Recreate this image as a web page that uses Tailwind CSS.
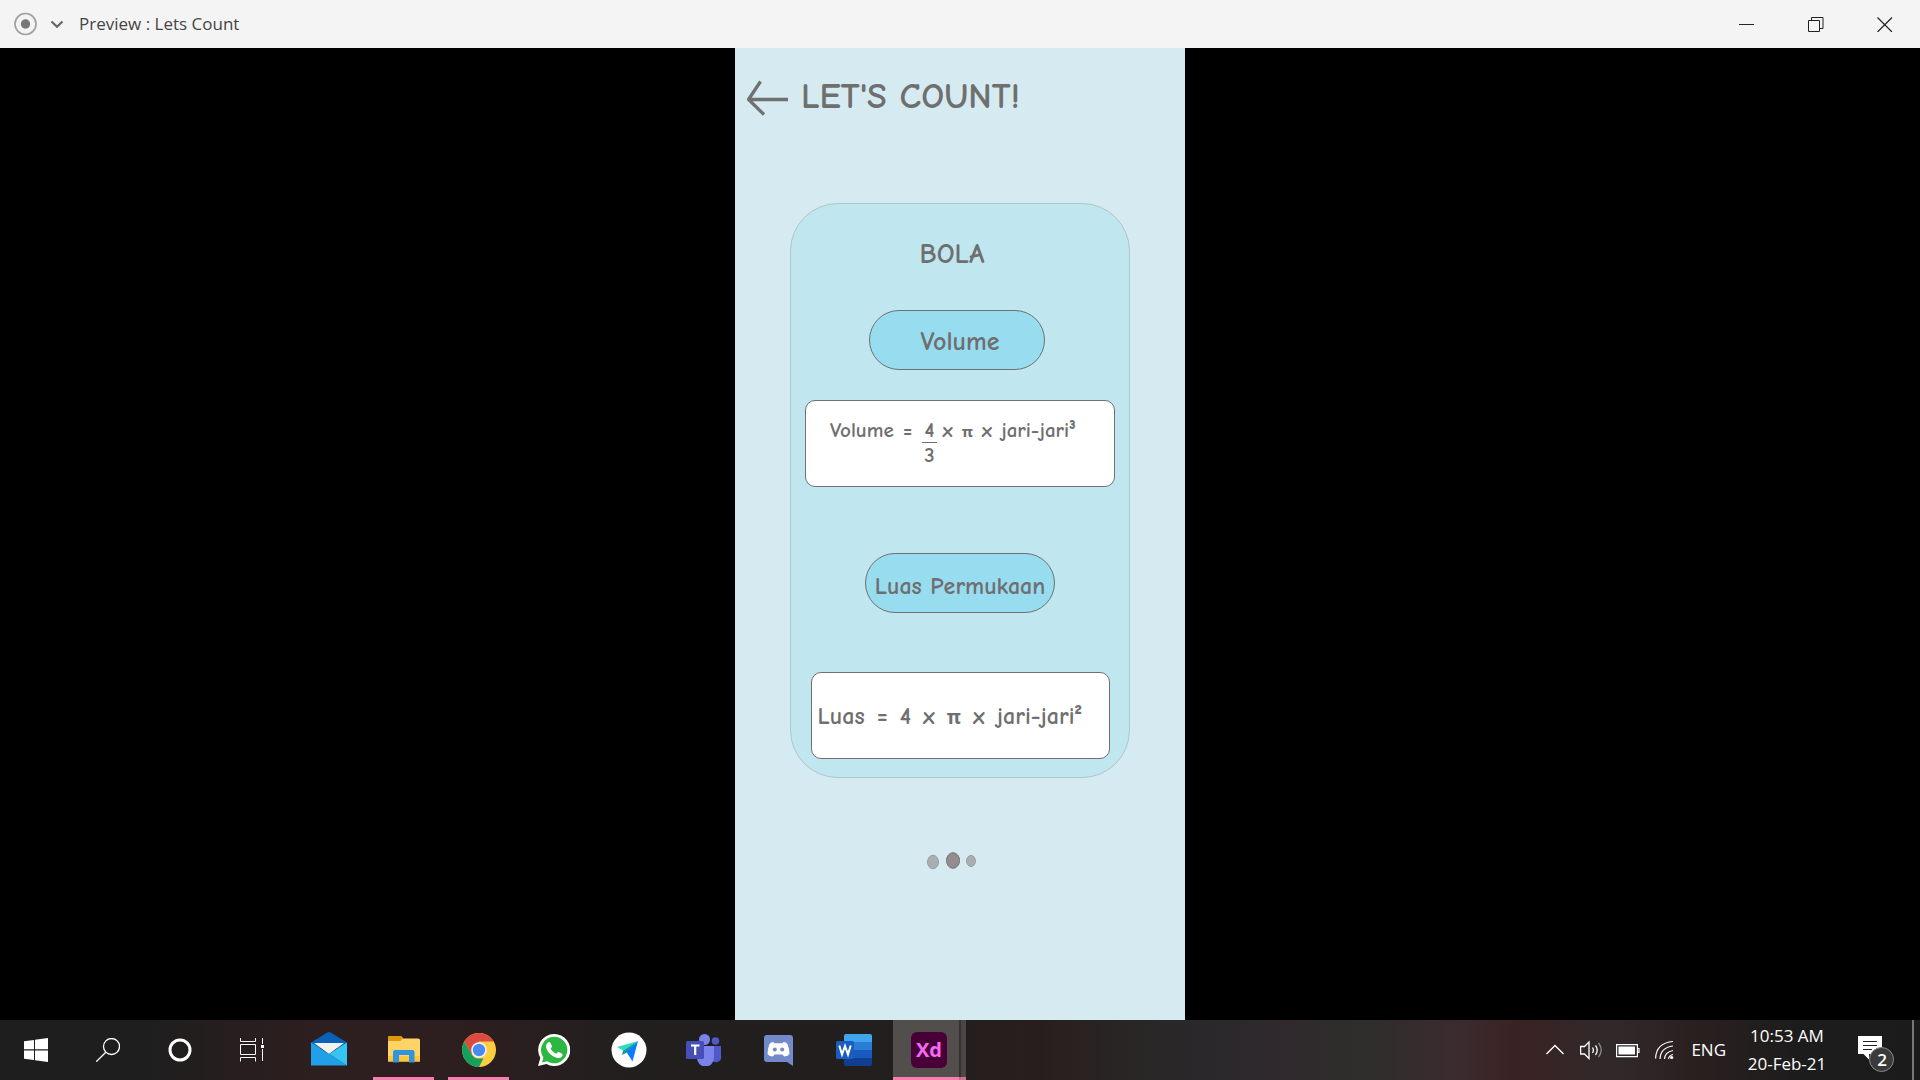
<!DOCTYPE html>
<html lang="id">
<head>
<meta charset="utf-8">
<title>Preview : Lets Count</title>
<script src="https://cdn.jsdelivr.net/npm/@tailwindcss/browser@4"></script>
</head>
<body class="min-h-screen flex flex-col bg-black font-['Open_Sans','Noto_Sans',sans-serif]">

<header class="flex h-12 shrink-0 items-center justify-between bg-[#f4f4f4] text-[#444]">
  <div class="flex items-center pl-[14px]">
    <button aria-label="Record" class="size-6">
      <svg viewBox="0 0 24 24" class="size-6"><circle cx="11.5" cy="12" r="10.5" fill="none" stroke="#a0a0a0" stroke-width="1.7"/><circle cx="11.5" cy="12" r="4.7" fill="#777"/></svg>
    </button>
    <button aria-label="Record options" class="ml-3 size-4">
      <svg viewBox="0 0 16 16" class="size-4" fill="none" stroke="#666" stroke-width="2.2"><path d="M1.5 5.5 7 10.8 12.5 5.5"/></svg>
    </button>
    <h1 class="ml-[13px] text-[17px] leading-6">Preview : Lets Count</h1>
  </div>
  <div class="flex">
    <button aria-label="Minimize" class="flex h-12 w-[69px] items-center justify-center"><svg class="size-4" viewBox="0 0 16 16"><path d="M0 8.5H15" stroke="#222"/></svg></button>
    <button aria-label="Restore" class="flex h-12 w-[69px] items-center justify-center"><svg class="size-4" viewBox="0 0 16 16" fill="none" stroke="#222"><path d="M.5 4.500h11v11H.5zM3.500 4.500v-3h11.500v11h-3.500"/></svg></button>
    <button aria-label="Close" class="flex h-12 w-[70px] items-center justify-center"><svg class="size-4" viewBox="0 0 16 16"><path d="M.5 1.500l14.500 14.500M15 1.500.5 16" stroke="#222" stroke-width="1.200"/></svg></button>
  </div>
</header>

<main class="mx-auto flex w-[450px] max-w-full flex-1 flex-col bg-[#d5ebf1] font-['Comic_Sans_MS','Comic_Neue','Noto_Sans',sans-serif] font-bold text-[#6f6f6f]">
  <div class="flex items-center pt-7 pl-3">
    <a href="#" aria-label="Back"><svg class="h-10 w-[42px]" viewBox="0 0 42 40" fill="none" stroke="#707070" stroke-width="3.300"><path d="M41 22.500H2M13.500 4.500 1.500 22.500 17 37.500"/></svg></a>
    <h2 class="ml-3 pt-px text-[36px] leading-10">LET'S COUNT!</h2>
  </div>

  <section class="mx-auto mt-[86px] flex w-[340px] flex-col items-center rounded-[48px] border border-[#aec5ca] bg-[#c0e7ef] pb-[18px]">
    <h3 class="mt-8 pr-4 text-[28px] leading-9">BOLA</h3>
    <button class="mt-[38px] mr-[6px] h-[60px] w-44 rounded-full border border-[#707070] bg-[#98dcef] pt-1 pl-[6px] text-[26px] leading-none">Volume</button>
    <div class="mt-[30px] flex h-[87px] w-[310px] items-start rounded-[10px] border border-[#707070] bg-white pt-[17px] pl-6 text-[21px] leading-[25px]">
      <div class="flex items-baseline gap-[9px]">
        <span>Volume</span><span>=</span>
        <span class="-mr-1 flex flex-col items-center"><span class="border-b border-[#707070] px-[3px] leading-6">4</span><span>3</span></span>
        <span>x</span><span class="text-[15px]">π</span><span>x</span><span>jari-jari³</span>
      </div>
    </div>
    <button class="mt-[66px] h-[60px] w-[190px] rounded-full border border-[#707070] bg-[#98dcef] pt-[6px] text-[24px] leading-none whitespace-nowrap">Luas Permukaan</button>
    <div class="mt-[59px] flex h-[87px] w-[299px] items-center rounded-[10px] border border-[#707070] bg-white pl-[6px] text-[24px]">
      <div class="flex items-baseline gap-3">
        <span>Luas</span><span>=</span><span>4</span><span>x</span><span class="text-[19px]">π</span><span>x</span><span>jari-jari²</span>
      </div>
    </div>
  </section>

  <nav aria-label="Pages" class="mt-[74px] flex items-center justify-center pr-[17px]">
    <a href="#" aria-label="Page 1"><svg class="h-[18px] w-3" viewBox="0 0 12 18"><ellipse cx="6" cy="10" rx="5.500" ry="6.700" fill="#a9afb1" stroke="#979d9f"/></svg></a>
    <a href="#" aria-label="Page 2" class="ml-[6px]"><svg class="h-[18px] w-4" viewBox="0 0 16 18"><ellipse cx="8" cy="8.500" rx="6.500" ry="7.800" fill="#948d8d" stroke="#757070"/></svg></a>
    <a href="#" aria-label="Page 3" class="ml-[5px]"><svg class="h-[18px] w-[10px]" viewBox="0 0 10 18"><ellipse cx="5" cy="9" rx="4.400" ry="5.600" fill="#a9afb1" stroke="#979d9f"/></svg></a>
  </nav>
</main>

<footer class="flex h-[60px] shrink-0 items-stretch justify-between bg-[linear-gradient(to_right,#1e1e1e_0%,#1f1e1e_8%,#2d1e1f_16%,#2d1e1f_24%,#211f1e_33%,#221f1e_49%,#291e1d_54%,#282524_58%,#2b292c_64%,#30292d_67%,#2e2e2b_71%,#3b2b2f_76%,#3a2223_79%,#30292a_84%,#2b2020_88%,#1c1c1c_94%,#1b1b1b_100%)] text-white">
  <div class="flex">
    <button aria-label="Start" class="flex w-[72px] items-center justify-center"><svg class="size-6" viewBox="0 0 24 24" fill="#fff"><path d="M0 3.300 10 1.900V11.300H0zM11 1.800 24 0V11.300H11zM0 12.400H10V22L0 20.700zM11 12.400H24V24L11 22.200z"/></svg></button>
    <button aria-label="Search" class="flex w-[72px] items-center justify-center"><svg class="size-6" viewBox="0 0 24 24" fill="none" stroke="#fff" stroke-width="1.300"><circle cx="15.500" cy="8.500" r="8"/><path d="M9.800 14.200.3 23.700"/></svg></button>
    <button aria-label="Cortana" class="flex w-[72px] items-center justify-center"><svg class="size-6" viewBox="0 0 24 24"><circle cx="12" cy="12" r="10" fill="none" stroke="#fff" stroke-width="3"/></svg></button>
    <button aria-label="Task view" class="flex w-[72px] items-center justify-center"><svg class="size-6" viewBox="0 0 24 24" fill="none" stroke="#fff"><path d="M.5 0v3.500h15V0M.5 6.500h15v10H.5zM.5 23.500v-4h15v4M22.500 0v6M22.500 11v12"/><path d="M21 7h3v3h-3z" fill="#fff" stroke="none"/></svg></button>
    <div class="flex pl-[3px]">
      <button aria-label="Mail" class="flex w-[75px] items-center justify-center"><svg class="size-9" viewBox="0 0 36 36"><path d="M0 10.500 16.500.5q1.500-.8 3 0L36 10.500V16H0z" fill="#0a62b8"/><path d="M3 11h30L18 22z" fill="#f2f2f2"/><path d="M0 10.500 18 22 36 33.500H0z" fill="#1fa0e8"/><path d="M36 10.500v23L18 22z" fill="#35c5f3"/></svg></button>
      <button aria-label="File Explorer" class="flex w-[75px] items-center justify-center border-b-[3px] border-[#f77fb0] [clip-path:inset(0_7px)]"><svg class="mt-[3px] h-7 w-8" viewBox="0 0 32 28"><path d="M0 1.500q0-1.500 1.500-1.500H13l2 2.500h15q2 0 2 1.500v21.500H0z" fill="#ffd365"/><path d="M0 5V1.500Q0 0 1.500 0H13l2 2-2.500 3z" fill="#dd9a0c"/><path d="M0 20h32v5.500H0z" fill="#fbc53c"/><path d="M5 26.500V16q0-2 2-2h17.500q2 0 2 2v10.500H21V19H11v7.500z" fill="#3294dc"/></svg></button>
      <button aria-label="Chrome" class="flex w-[75px] items-center justify-center border-b-[3px] border-[#f77fb0] [clip-path:inset(0_7px)]"><svg class="mt-[3px] size-[34px]" viewBox="0 0 34 34"><circle cx="17" cy="17" r="17" fill="#ffcd40"/><path d="M2.300 8.500A17 17 0 0 1 31.700 8.500H17L9.600 21.300z" fill="#db4b3f"/><path d="M2.300 8.500 9.600 21.300Q12.500 26 17 25.500h4.400L17 34A17 17 0 0 1 2.300 8.500z" fill="#17a05d"/><circle cx="17" cy="17" r="7.800" fill="#f3f3f3"/><circle cx="17" cy="17" r="6.200" fill="#4a8af4"/></svg></button>
      <button aria-label="WhatsApp" class="flex w-[75px] items-center justify-center"><svg class="size-8" viewBox="0 0 32 32"><path d="M16 0a16 16 0 1 1-7.500 30L0 32l2.300-8A16 16 0 0 1 16 0z" fill="#fff"/><path d="M16 2.700a13.300 13.300 0 1 1-7 24.600L4 28.500l1.400-5A13.300 13.300 0 0 1 16 2.700z" fill="#2cb742"/><path d="M10 8.500c1-.8 2-.6 2.400.2l1.500 3.300c.3.800-.2 1.400-1.300 2.500 1.400 2.700 3 4 5.800 5.200 1.200-1.400 1.600-2 2.500-1.600l3.200 1.600c.9.500.3 2.400-.5 3.200-2 1.800-5 1.300-8.600-.7-3.300-1.900-5.700-5-6.600-7.700-.8-2.500-.1-4.800 1.600-6z" fill="#fff"/></svg></button>
      <button aria-label="Telegram" class="flex w-[75px] items-center justify-center"><svg class="size-9" viewBox="0 0 36 36"><circle cx="18" cy="18" r="17.500" fill="#fff"/><path d="M27 9 6 15l6 3.500z" fill="#2edcc0"/><path d="M27 9 12 18.500l-1 4.500 5-2.500z" fill="#159a9e"/><path d="M27 9 15.500 20l6 9.500z" fill="#0a7cff"/></svg></button>
      <button aria-label="Teams" class="flex w-[75px] items-center justify-center"><svg class="h-8 w-9" viewBox="0 0 36 32"><circle cx="29.500" cy="7" r="3.800" fill="#5059c9"/><path d="M26 12h9v10a5 5 0 0 1-9 4z" fill="#5059c9"/><circle cx="18.500" cy="5.500" r="5.500" fill="#7b83eb"/><path d="M11 12h17v12a8.500 8.500 0 0 1-17 0z" fill="#7b83eb"/><rect y="7" width="18" height="18" rx="1.500" fill="#464eb8"/><path d="M5 11.500h8.500M9.200 11.500V21" stroke="#fff" stroke-width="2.200"/></svg></button>
      <button aria-label="Discord" class="flex w-[75px] items-center justify-center"><svg class="mt-px h-[31px] w-[29px]" viewBox="0 0 29 31"><path d="M3 0h23q3 0 3 3v28l-6-4H3q-3 0-3-3V3Q0 0 3 0z" fill="#7289ca"/><path d="M9 7q-2 0-3.500 2-2 5-2 10 2 2.500 5.500 2.500l1.500-2h8l1.500 2q3.500 0 5.500-2.500 0-5-2-10-1.500-2-4-2l-1 1.200h-8z" fill="#fff"/><circle cx="10.800" cy="14.500" r="2" fill="#7289ca"/><circle cx="18.200" cy="14.500" r="2" fill="#7289ca"/></svg></button>
      <button aria-label="Word" class="flex w-[75px] items-center justify-center"><svg class="h-8 w-9" viewBox="0 0 36 32"><path d="M8 2q0-2 2-2h24q2 0 2 2v6H8z" fill="#41a5ee"/><path d="M8 8h28v8H8z" fill="#2b7cd3"/><path d="M8 16h28v8H8z" fill="#185abd"/><path d="M8 24h28v6q0 2-2 2H10q-2 0-2-2z" fill="#103f91"/><rect y="7" width="18" height="18" rx="1.500" fill="#1b5cbe"/><path d="M3.300 11.500 6 20.500l3-8.500 3 8.500 2.700-9" fill="none" stroke="#fff" stroke-width="2"/></svg></button>
      <button aria-label="Adobe XD" class="flex w-[75px] pl-[2px]">
        <span class="flex h-[60px] w-[66px] items-center justify-center border-b-[3px] border-[#f77fb0] bg-[#524e4c] pl-[6px]"><span class="mt-[3px] flex size-9 items-center justify-center rounded-md bg-[#470137] text-[20px] font-bold text-[#f769f4]">Xd</span></span>
        <span class="h-[60px] w-[2px] border-b-[3px] border-[#c4688d] bg-[#353130]"></span>
        <span class="h-[60px] w-[5px] border-b-[3px] border-[#d47099] bg-[#4a4745]"></span>
      </button>
    </div>
  </div>

  <div class="flex items-center">
    <button aria-label="Show hidden icons"><svg class="h-5 w-5" viewBox="0 0 20 20" fill="none" stroke="#fff" stroke-width="1.400"><path d="M1.500 14 10 5.500 18.500 14"/></svg></button>
    <button aria-label="Volume" class="ml-[15px]"><svg class="h-5 w-6" viewBox="0 0 24 20" fill="none" stroke="#fff" stroke-width="1.300"><path d="M.6 6.500h3.900L9 2v16.500L4.500 14H.6zM12.500 7.500q1.800 2.700 0 5.500M15.500 5.500q3.500 4.500 0 9.500"/><path d="M18.500 3q5.500 7 0 14" stroke="#888"/></svg></button>
    <button aria-label="Battery" class="ml-3"><svg class="h-5 w-6" viewBox="0 0 24 20"><path d="M.6 4.600h20.800v12H.6zM21.500 8.500h1.500v4h-1.500" fill="none" stroke="#fff" stroke-width="1.200"/><path d="M2.500 6.500h16.500v8H2.500z" fill="#fff"/></svg></button>
    <button aria-label="Network" class="ml-[15px]"><svg class="h-5 w-5" viewBox="0 0 20 20" fill="none" stroke="#fff" stroke-width="1.200"><path d="M.6 18.500Q1 3 18 1.500M5 19Q5.500 7.500 18 6M9.500 19Q10 12 18 10.500M13.500 19q.5-3.500 4.500-4.500"/><circle cx="16.700" cy="17.500" r="1.600" fill="#fff" stroke="none"/></svg></button>
    <button class="ml-4 text-[17px] leading-6">ENG</button>
    <button class="ml-4 w-[90px] text-center text-[17px] leading-7"><time class="block">10:53 AM</time><time class="block">20-Feb-21</time></button>
    <button aria-label="2 notifications" class="relative ml-[26px] mt-2 h-9 w-9">
      <svg class="h-9 w-9" viewBox="0 0 36 36"><path d="M0 0h24v18H11v5.500L5.500 18H0z" fill="#fff"/><path d="M5 5.500h14M5 9.500h14M5 13.500h9" stroke="#222" stroke-width="1.200"/><circle cx="23.500" cy="23.500" r="12" fill="#3a3a3a" stroke="#8a8a8a"/></svg>
      <span class="absolute top-3 left-3 w-6 text-center text-[17px] leading-6 font-semibold">2</span>
    </button>
    <button aria-label="Show desktop" class="ml-[18px] h-[60px] w-2 border-l-2 border-[#777]"></button>
  </div>
</footer>
</body>
</html>
